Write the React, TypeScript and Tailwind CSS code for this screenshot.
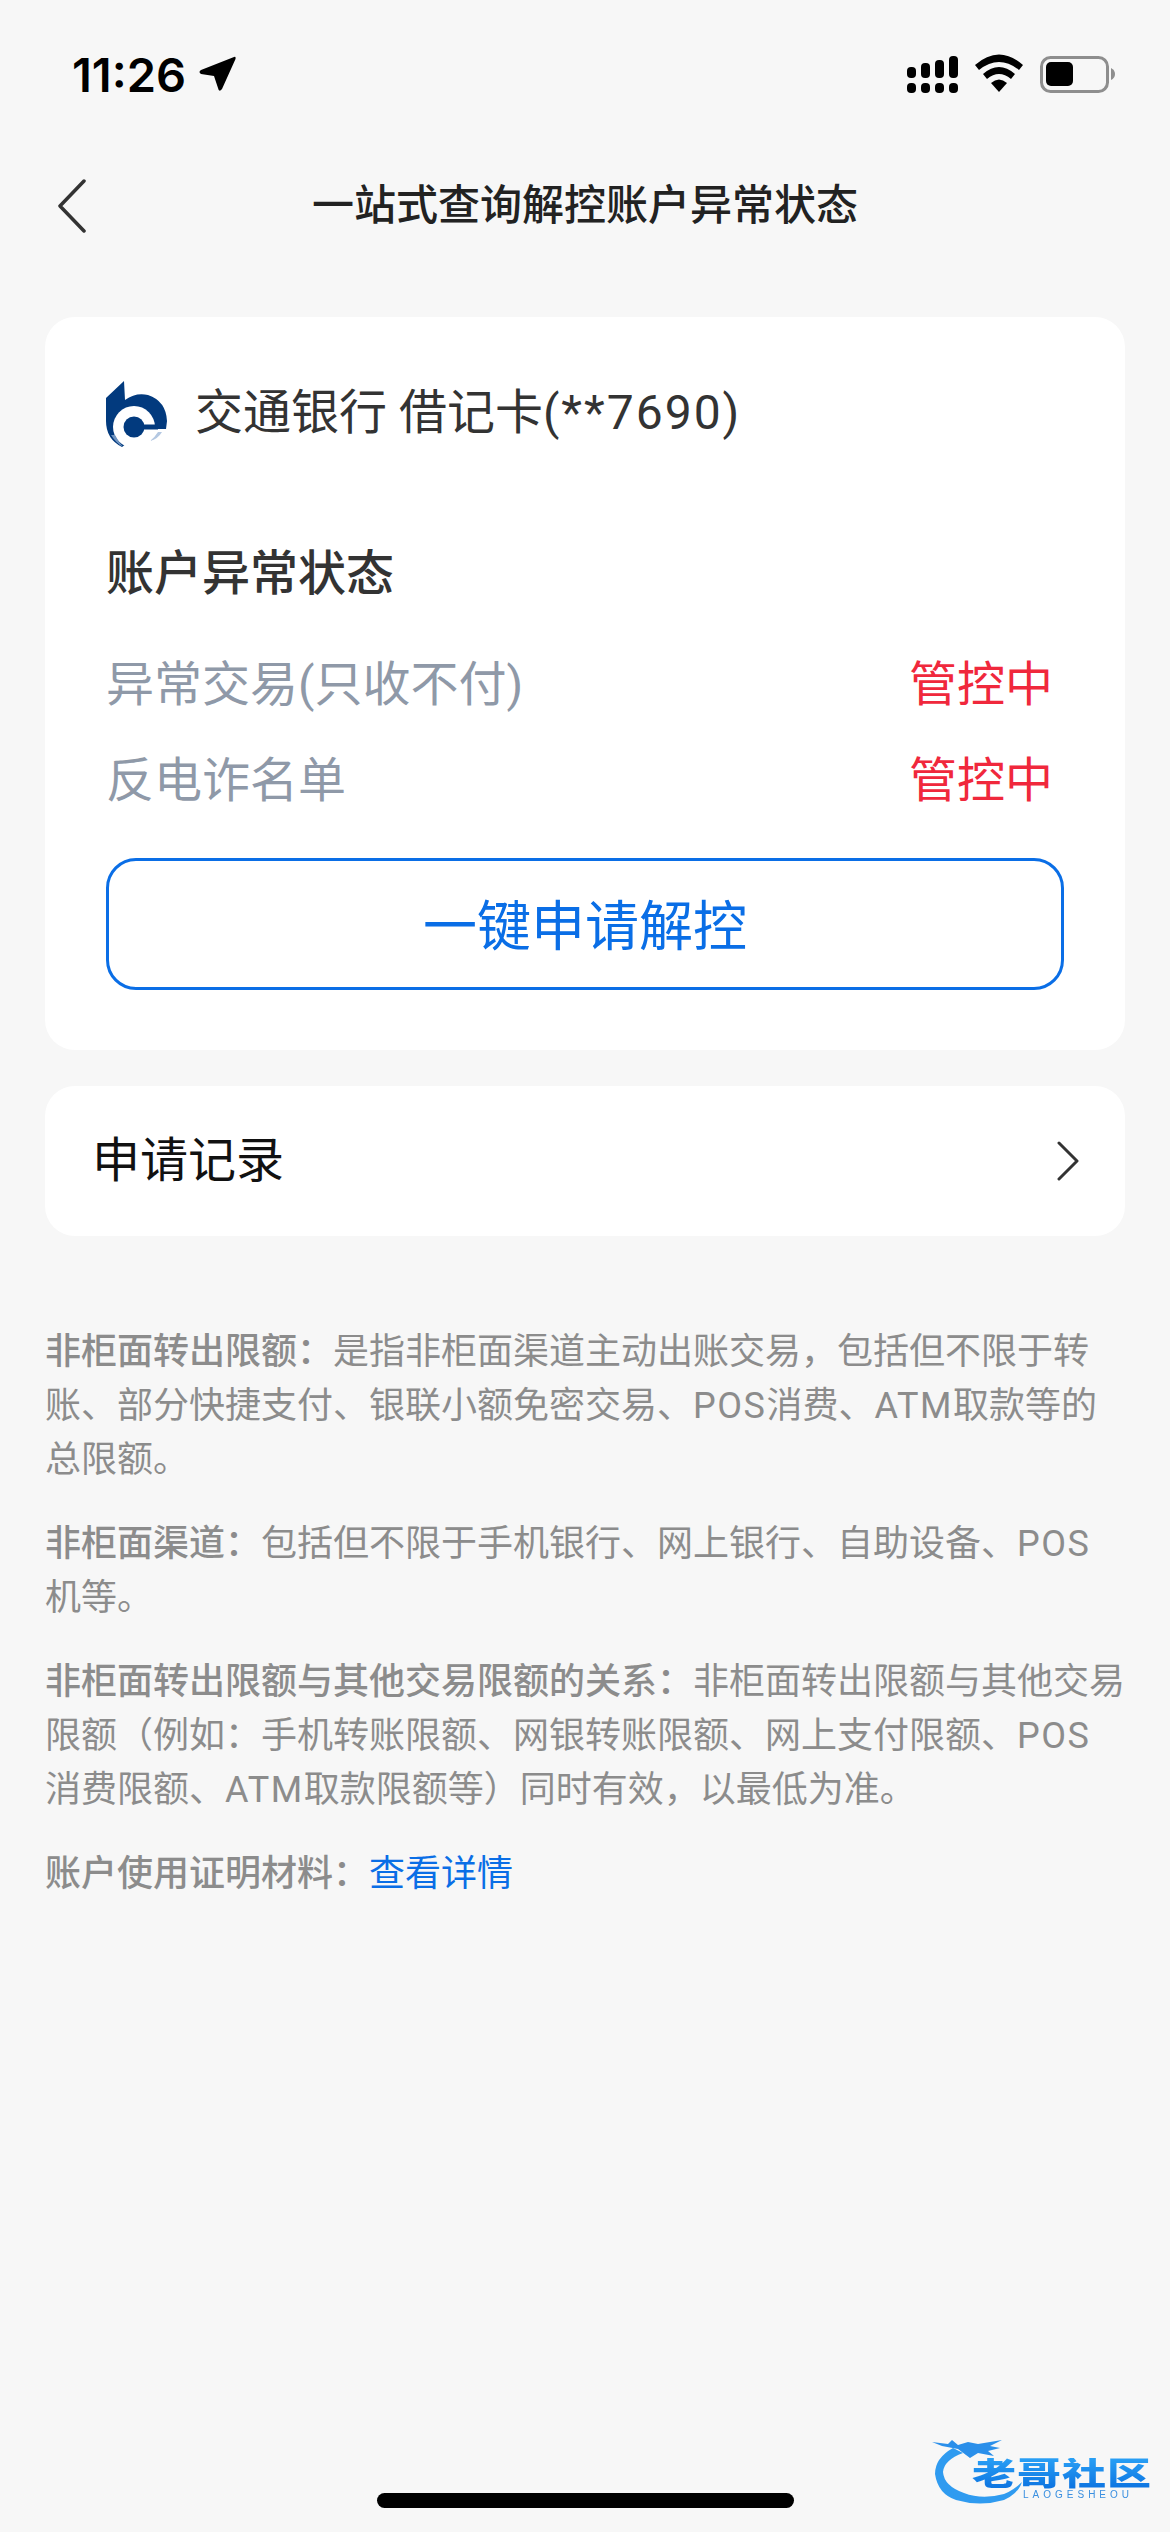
import React from 'react';

const CJK = "font-['Roboto','Noto_Sans_CJK_SC',sans-serif]";

function StatusIcons() {
  return (
    <svg width="210" height="40" viewBox="905 54 210 40">
      {/* signal */}
      <rect x="907" y="67" width="9" height="11" rx="4" />
      <rect x="921" y="63" width="9" height="15" rx="4" />
      <rect x="935" y="60" width="9" height="18" rx="4" />
      <rect x="949" y="56" width="9" height="22" rx="4" />
      <rect x="907" y="83" width="9" height="10" rx="4" />
      <rect x="921" y="83" width="9" height="10" rx="4" />
      <rect x="935" y="83" width="9" height="10" rx="4" />
      <rect x="949" y="83" width="9" height="10" rx="4" />
      {/* wifi */}
      <path d="M975 65 Q999 44 1023 65 L1019 70 Q999 54 979 70 Z" />
      <path d="M983 74 Q999 60 1015 74 L1011 79 Q999 69 987 79 Z" />
      <path d="M991 83 Q999 76 1007 83 L999 92 Z" />
      {/* battery */}
      <rect x="1041.5" y="57.5" width="66" height="34" rx="9" fill="none" stroke="#8e8e8e" strokeWidth="3" />
      <rect x="1046" y="62" width="27" height="24" rx="5" />
      <path d="M1111 68 Q1115 70 1115 74 Q1115 78 1111 80 Z" fill="#8e8e8e" />
    </svg>
  );
}

function BankLogo() {
  return (
    <svg width="61" height="66" viewBox="0 0 61 66" className="shrink-0">
      <path
        d="M0 17 L18 0 L19 19 Q30 11 42 14 Q60 20 61 40 L60 48 L40 48 L16 66 Q0 58 0 40 Z"
        fill="#023a7e"
      />
      <circle cx="28" cy="46" r="21" fill="#ffffff" />
      <circle cx="28" cy="46" r="10.5" fill="#023a7e" />
      <rect x="28" y="43.5" width="24" height="5" fill="#023a7e" />
      <path d="M17 66 Q10 62 5 54 L9 54 Q12 60 17 66 Z" fill="#6f93c0" />
      <path d="M44 60 Q49 56 52 51 L56 51 Q52 58 44 60 Z" fill="#b4c8e2" />
    </svg>
  );
}

function Watermark() {
  return (
    <div className="absolute left-[932px] top-[2430px] w-[222px] h-[76px] blur-[0.7px]">
      <svg width="100" height="76" viewBox="0 0 100 76" className="absolute left-0 top-0">
        <path d="M21 18 Q3 28 3 44 Q6 64 24 70 Q48 77 72 70 Q86 64 90 52 Q82 60 72 64 Q50 70 32 63 Q12 56 11 42 Q12 30 31 23 Z" fill="#2f9bf0" />
        <path d="M0 12 L16 14 L20 10 L26 15 L36 12 L46 14 L70 10 L58 16 L68 18 L56 21 L62 26 L46 23 L38 28 L26 19 L10 16 Z" fill="#2a8fea" />
      </svg>
      <div className="absolute left-[40px] top-[28px] origin-top scale-y-[0.72] text-[44px] leading-[44px] font-black tracking-[1px] whitespace-nowrap bg-linear-to-b from-[#2aa0f5] to-[#0c72e0] bg-clip-text text-transparent">
        老哥社区
      </div>
      <div className="absolute left-[91px] top-[60px] text-[10px] leading-[10px] text-[#3a8fe0] tracking-[4px] whitespace-nowrap font-['Liberation_Sans',sans-serif]">
        LAOGESHEOU
      </div>
    </div>
  );
}

function StatusRow({ label }: { label: string }) {
  return (
    <div className="flex justify-between items-center h-[96px] pr-[11px]">
      <span className="text-[#8f99a8]">{label}</span>
      <span className="text-[#f0283c]">管控中</span>
    </div>
  );
}

function Latin({ children }: { children: string }) {
  return <span className="tracking-[1.5px]">{children}</span>;
}

export default function App() {
  return (
    <div className={`relative w-[1170px] h-[2532px] overflow-hidden bg-[#f7f7f7] ${CJK}`}>
      {/* status bar */}
      <div className="flex justify-between items-center h-[148px] pl-[72px] pr-[55px]">
        <div className="flex items-center gap-[13px]">
          <span className="text-[47px] leading-none font-semibold text-black font-['Inter',sans-serif]">11:26</span>
          <svg width="37" height="36" viewBox="0 0 37 36">
            <path d="M35 1 Q37 0 36.5 3 L23 33 Q20 37 19 32 L15 20 L2 18 Q-1 16 2 14 Z" fill="#000" />
          </svg>
        </div>
        <StatusIcons />
      </div>

      {/* nav */}
      <div className="flex items-center justify-center relative h-[116px]">
        <svg width="30" height="54" viewBox="0 0 30 54" className="absolute left-[57px] top-[31px]">
          <path d="M27 2 L3 27 L27 52" fill="none" stroke="#333" strokeWidth="3.5" strokeLinecap="round" strokeLinejoin="round" />
        </svg>
        <span className="text-[42px] leading-none font-medium text-[#222]">一站式查询解控账户异常状态</span>
      </div>

      <main className="px-[45px] pt-[53px]">
        {/* account card */}
        <div className="bg-white rounded-[30px] h-[733px] pl-[61px] pr-[61px]">
          <div className="flex items-center gap-[28px] pt-[63px] h-[130px]">
            <BankLogo />
            <span className="text-[48px] leading-none text-[#333] -mt-[2px]">
              交通银行 借记卡<span className="tracking-[2px]">(**7690)</span>
            </span>
          </div>
          <div className="text-[48px] leading-none font-medium text-[#333] mt-[103px]">账户异常状态</div>
          <div className="text-[48px] leading-none mt-[39px]">
            <StatusRow label="异常交易(只收不付)" />
            <StatusRow label="反电诈名单" />
          </div>
          <button className="block w-full h-[132px] mt-[29px] pt-[8px] rounded-[30px] border-[3px] border-[#0a6ee6] text-[54px] leading-none text-[#0a6ee6]">
            一键申请解控
          </button>
        </div>

        {/* records */}
        <div className="flex items-center justify-between bg-white rounded-[30px] h-[150px] mt-[36px] pl-[47px] pr-[46px]">
          <span className="text-[48px] leading-none text-[#111]">申请记录</span>
          <svg width="22" height="40" viewBox="0 0 22 40">
            <path d="M2 2 L20 20 L2 38" fill="none" stroke="#333" strokeWidth="3" strokeLinecap="round" strokeLinejoin="round" />
          </svg>
        </div>

        {/* notes */}
        <div className="mt-[89px] text-[36px] leading-[54px] text-[#8c8c8c] space-y-[30px] w-[1085px]">
          <p>
            <span className="font-medium">非柜面转出限额：</span>
            是指非柜面渠道主动出账交易，包括但不限于转
            <br />
            账、部分快捷支付、银联小额免密交易、<Latin>POS</Latin>消费、<Latin>ATM</Latin>取款等的
            <br />
            总限额。
          </p>
          <p>
            <span className="font-medium">非柜面渠道：</span>
            包括但不限于手机银行、网上银行、自助设备、<Latin>POS</Latin>
            <br />
            机等。
          </p>
          <p>
            <span className="font-medium">非柜面转出限额与其他交易限额的关系：</span>
            非柜面转出限额与其他交易
            <br />
            限额（例如：手机转账限额、网银转账限额、网上支付限额、<Latin>POS</Latin>
            <br />
            消费限额、<Latin>ATM</Latin>取款限额等）同时有效，以最低为准。
          </p>
          <p>
            <span className="font-medium">账户使用证明材料：</span>
            <span className="text-[#0a6ee6]">查看详情</span>
          </p>
        </div>
      </main>

      <Watermark />
      <div className="absolute left-[377px] top-[2493px] w-[417px] h-[15px] rounded-full bg-black" />
    </div>
  );
}
